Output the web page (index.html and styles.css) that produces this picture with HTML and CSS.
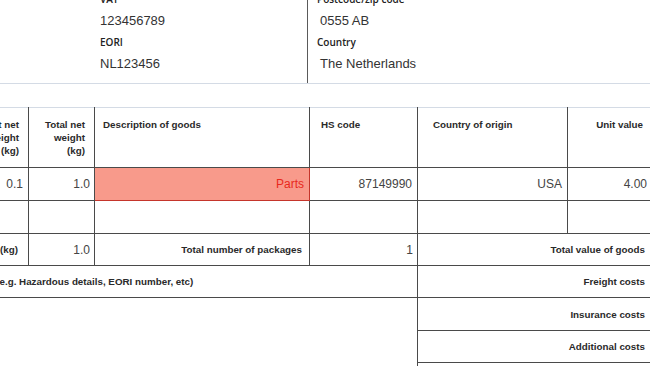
FILE: index.html
```html
<!DOCTYPE html>
<html lang="en">
<head>
<meta charset="utf-8">
<title>Commercial invoice</title>
<link rel="stylesheet" href="styles.css">
</head>
<body>
<div class="sheet">
  <section class="parties">
    <div class="party party-left">
      <div class="label">VAT</div>
      <div class="value">123456789</div>
      <div class="label">EORI</div>
      <div class="value">NL123456</div>
    </div>
    <div class="party party-right">
      <div class="label">Postcode/zip code</div>
      <div class="value indent">0555 AB</div>
      <div class="label">Country</div>
      <div class="value indent">The Netherlands</div>
    </div>
  </section>

  <table class="goods">
    <colgroup>
      <col class="c-qty">
      <col class="c-unw">
      <col class="c-tnw">
      <col class="c-desc">
      <col class="c-hs">
      <col class="c-origin">
      <col class="c-value">
    </colgroup>
    <tr class="r-head">
      <th class="right">Quantity</th>
      <th class="right">Unit net<br>weight<br>(kg)</th>
      <th class="right">Total net<br>weight<br>(kg)</th>
      <th class="left">Description of goods</th>
      <th class="left hs">HS code</th>
      <th class="left origin">Country of origin</th>
      <th class="right">Unit value</th>
    </tr>
    <tr class="r-data">
      <td>10</td>
      <td>0.1</td>
      <td class="tight">1.0</td>
      <td class="flag">Parts</td>
      <td>87149990</td>
      <td>USA</td>
      <td>4.00</td>
    </tr>
    <tr class="r-data">
      <td></td><td></td><td></td><td></td><td></td><td></td><td></td>
    </tr>
    <tr class="r-sum">
      <td colspan="2" class="strong lbl-kg">Total net weight (kg)</td>
      <td class="tight">1.0</td>
      <td class="strong">Total number of packages</td>
      <td class="tight">1</td>
      <td colspan="2" class="strong lbl-r">Total value of goods</td>
    </tr>
    <tr class="r-sum">
      <td colspan="5" class="strong remarks">Additional information (e.g. Hazardous details, EORI number, etc)</td>
      <td colspan="2" class="strong lbl-r">Freight costs</td>
    </tr>
    <tr class="r-cost">
      <td colspan="5" class="blank"></td>
      <td colspan="2" class="strong lbl-r">Insurance costs</td>
    </tr>
    <tr class="r-sum">
      <td colspan="5" class="blank"></td>
      <td colspan="2" class="strong lbl-r">Additional costs</td>
    </tr>
    <tr class="r-sum">
      <td colspan="5" class="blank"></td>
      <td colspan="2" class="strong lbl-r">Total invoice amount</td>
    </tr>
  </table>
</div>
</body>
</html>
```
FILE: styles.css
```css
html, body {
  margin: 0;
  padding: 0;
  background: #ffffff;
}

body {
  width: 650px;
  height: 366px;
  overflow: hidden;
  font-family: "Liberation Sans", Arial, sans-serif;
  color: #3a3a3a;
}

.sheet {
  width: 772px;
  margin-left: -120px;
  margin-top: -9px;
}

/* ---------- party details ---------- */
.parties {
  display: flex;
  border-bottom: 1px solid #d4dbe5;
  padding-bottom: 6px;
}

.party-left {
  width: 428px;
  padding-left: 220px;
  box-sizing: border-box;
  border-right: 1px solid #5a5a5a;
  margin-bottom: -6px;
  padding-bottom: 6px;
}

.party-right {
  padding-left: 9px;
}

.label {
  font-family: "Open Sans", "Noto Sans", sans-serif;
  font-weight: 600;
  font-size: 10px;
  line-height: 16px;
  color: #222;
}

.value {
  font-size: 13px;
  line-height: 27px;
  color: #333;
}

.value.indent {
  padding-left: 3px;
}

/* ---------- goods table ---------- */
.goods {
  margin-top: 23px;
  width: 772px;
  table-layout: fixed;
  border-collapse: collapse;
}

.c-qty { width: 80px; }
.c-unw { width: 68px; }
.c-tnw { width: 66px; }
.c-desc { width: 215px; }
.c-hs { width: 108px; }
.c-origin { width: 150px; }
.c-value { width: 85px; }

.goods th,
.goods td {
  border: 1px solid #4a4a4a;
  padding: 0;
}

.goods th {
  border-top-color: #d4dbe5;
  vertical-align: top;
  font-size: 9.8px;
  line-height: 13px;
  font-weight: bold;
  color: #2a2a2a;
  padding-top: 10px;
}

.goods th.right {
  text-align: right;
  padding-right: 9px;
}

.goods th.left {
  text-align: left;
  padding-left: 8px;
}

.goods th.hs { padding-left: 11px; }
.goods th.origin { padding-left: 15px; }

.r-head { height: 60px; }
.r-data { height: 33px; }
.r-sum { height: 32px; }
.r-cost { height: 33px; }

.goods td {
  font-size: 12px;
  text-align: right;
  padding-right: 5px;
  vertical-align: middle;
  color: #444;
  white-space: nowrap;
}

.goods td.tight {
  padding-right: 4px;
}

.goods td.flag {
  background: #f89a8b;
  color: #e8291c;
  border-color: #c5352b;
}

.goods td.strong {
  font-size: 9.8px;
  font-weight: bold;
  color: #2a2a2a;
}

.goods td.lbl-kg {
  padding-right: 10px;
}

.goods td.strong:not(.lbl-kg):not(.remarks) {
  padding-right: 7px;
}

.goods td.remarks {
  text-align: left;
  padding-left: 8px;
}

.goods td.blank {
  border: none;
}
```
